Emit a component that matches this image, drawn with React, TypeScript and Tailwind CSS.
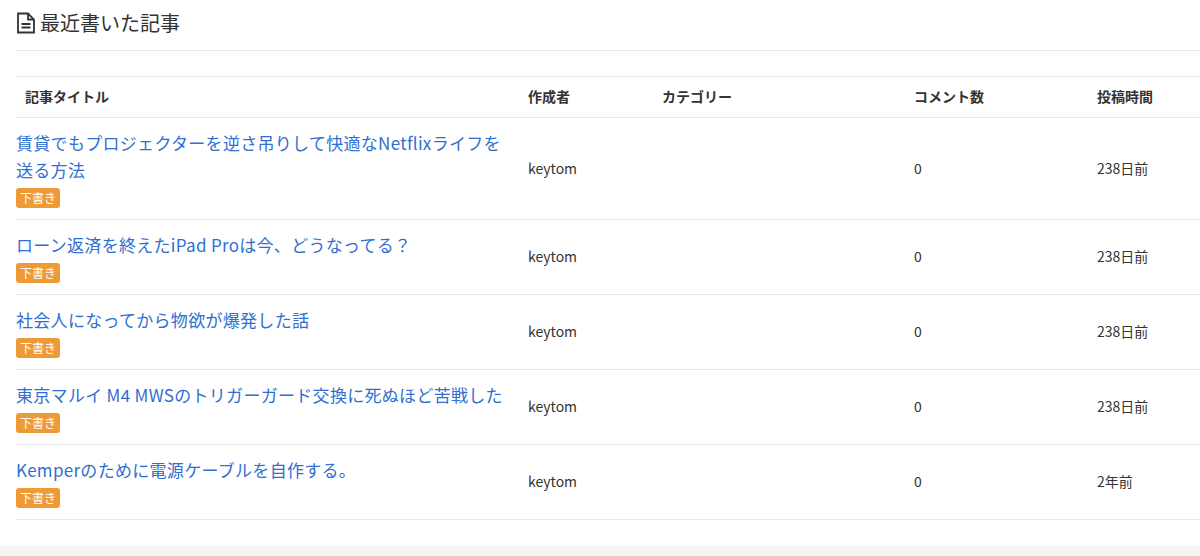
import React from "react";

const rows = [
  { title: "賃貸でもプロジェクターを逆さ吊りして快適なNetflixライフを送る方法", time: "238日前" },
  { title: "ローン返済を終えたiPad Proは今、どうなってる？", time: "238日前" },
  { title: "社会人になってから物欲が爆発した話", time: "238日前" },
  { title: "東京マルイ M4 MWSのトリガーガード交換に死ぬほど苦戦した", time: "238日前" },
  { title: "Kemperのために電源ケーブルを自作する。", time: "2年前" },
];

const font = { fontFamily: '"Noto Sans CJK JP", "Noto Sans", sans-serif' };

export default function App() {
  return (
    <div className="w-[1200px] h-[556px] bg-white overflow-hidden" style={font}>
      <div className="pl-4 h-[546px]">
        <div className="h-[51px] flex items-center gap-1 border-b border-[#e6eaee] pb-1">
          <svg width="20" height="22" viewBox="0 0 20 22" fill="none" stroke="#333" strokeWidth="1.8">
            <path d="M2 1.5h10l6 6v13H2z" />
            <path d="M12 1.5v6h6" />
            <path d="M5.5 12h9M5.5 15.5h9" />
          </svg>
          <h2 className="text-[20px] text-[#333]">最近書いた記事</h2>
        </div>
        <div className="h-[26px] border-b border-[#e6eaee]" />
        <table className="w-full border-collapse text-[14px] text-[#333]">
          <thead>
            <tr className="h-[40px] border-b border-[#e6eaee] font-bold">
              <th className="text-left pl-[9px] w-[512px]">記事タイトル</th>
              <th className="text-left w-[134px]">作成者</th>
              <th className="text-left w-[252px]">カテゴリー</th>
              <th className="text-left w-[183px]">コメント数</th>
              <th className="text-left">投稿時間</th>
            </tr>
          </thead>
          <tbody>
            {rows.map((r) => (
              <tr key={r.title} className="border-b border-[#e6eaee]">
                <td className="py-[11px] pr-[20px] align-middle">
                  <a className="block text-[17px] tracking-[0.3px] leading-[27px] text-[#2f6fd1]">{r.title}</a>
                  <span className="inline-block mt-[5px] px-[4px] rounded-[3px] bg-[#ee9a36] text-white text-[12px] leading-[20px]">下書き</span>
                </td>
                <td>keytom</td>
                <td></td>
                <td>0</td>
                <td>{r.time}</td>
              </tr>
            ))}
          </tbody>
        </table>
      </div>
      <div className="h-[10px] bg-[#f5f5f5]" />
    </div>
  );
}
